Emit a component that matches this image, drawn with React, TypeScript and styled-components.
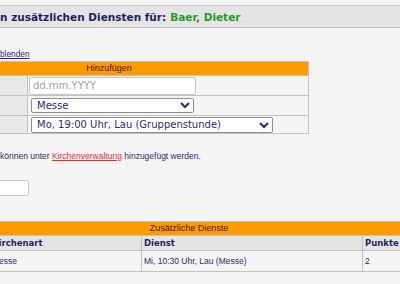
import styled, { createGlobalStyle } from 'styled-components';

//
//Page basics
const GlobalStyle = createGlobalStyle`
    html, body {
        margin: 0;
        padding: 0;
        background: #f4f4f4;
        overflow: hidden;
    }
    body {
        font-family: "Liberation Sans", Arial, sans-serif;
        color: #2c2c6c;
    }
`;

const Page = styled.div`
    width: 400px;
    height: 284px;
    padding-top: 5px;
    overflow: hidden;
    box-sizing: border-box;
`;

//
//Grey title bar at the top
const TitleBar = styled.div`
    height: 21px;
    display: flex;
    align-items: center;
    background: #e4e4e4;
    border-top: 1px solid #cbcbcb;
    border-bottom: 1px solid #c4c4c4;
    font-family: "DejaVu Sans", Verdana, sans-serif;
    font-weight: bold;
    font-size: 10.5px;
    color: #1e1e60;
    white-space: nowrap;
`;

const Name = styled.span`
    color: #1f9a2c;
    margin-left: 4px;
`;

const ToggleLink = styled.a`
    display: block;
    margin-top: 21px;
    font-size: 8.3px;
    line-height: 10px;
    color: #2a2a80;
    text-decoration: underline;
    cursor: pointer;
`;

//
//Tables
const Table = styled.table<{ $width: number; $top: number }>`
    border-collapse: collapse;
    table-layout: fixed;
    width: ${(p) => p.$width}px;
    margin-left: -91px;
    margin-top: ${(p) => p.$top}px;
    border: 1px solid #c2c2c2;
`;

const OrangeHead = styled.th`
    background: #ff9900;
    height: 13px;
    padding: 0;
    border: 1px solid #c2c2c2;
    font-weight: normal;
    font-size: 9px;
    line-height: 13px;
    color: #3a1f2a;
    text-align: center;
`;

const LabelCell = styled.td<{ $h: number }>`
    background: #e8e8e8;
    border: 1px solid #c2c2c2;
    height: ${(p) => p.$h}px;
    padding: 0;
`;

const FieldCell = styled.td`
    border: 1px solid #c2c2c2;
    padding: 0 1px;
    vertical-align: middle;
`;

const DateInput = styled.input`
    display: block;
    box-sizing: border-box;
    width: 167px;
    height: 18px;
    margin: 0;
    padding: 0 3px;
    border: 1px solid #c6c6c6;
    border-radius: 2px;
    background: #fff;
    font-family: "DejaVu Sans", Verdana, sans-serif;
    font-size: 10px;
    color: #2c2c6c;
    &::placeholder {
        color: #a0a0a0;
    }
`;

const Select = styled.select<{ $w: number; $h: number }>`
    display: block;
    box-sizing: border-box;
    width: ${(p) => p.$w}px;
    height: ${(p) => p.$h}px;
    margin: 0 0 0 2px;
    padding: 0 0 0 1px;
    border: 1px solid #8e8e8e;
    border-radius: 2px;
    background: #fff;
    font-family: "DejaVu Sans", Verdana, sans-serif;
    font-size: 10px;
    color: #2a2a70;
`;

const Info = styled.p`
    margin: 17px 0 0 0;
    font-size: 8.5px;
    line-height: 10px;
    color: #2c2c6c;
    white-space: nowrap;
`;

const InfoLink = styled.a`
    color: #ee2a2a;
    text-decoration: underline;
`;

const SmallInput = styled.input`
    display: block;
    box-sizing: border-box;
    width: 120px;
    height: 16px;
    margin: 19px 0 0 -91px;
    border: 1px solid #c6c6c6;
    border-radius: 2px;
    background: #fff;
`;

const HeadCell = styled.th`
    background: #e4e4e4;
    border: 1px solid #c2c2c2;
    height: 14px;
    padding: 0 2px;
    text-align: left;
    font-family: "DejaVu Sans", Verdana, sans-serif;
    font-weight: bold;
    font-size: 8.5px;
    color: #1e1e60;
    white-space: nowrap;
    overflow: hidden;
`;

const DataCell = styled.td`
    border: 1px solid #c2c2c2;
    height: 20px;
    padding: 0 2px;
    font-size: 8.5px;
    color: #2c2c6c;
    white-space: nowrap;
    overflow: hidden;
`;

const rows = [{ time: 'Mi, 10:30 Uhr, Lau (Messe)', type: 'Messe', points: 2 }];

const App = () => {
    return (
        <Page>
            <GlobalStyle />
            <TitleBar>
                n zusätzlichen Diensten für:<Name>Baer, Dieter</Name>
            </TitleBar>
            <ToggleLink>blenden</ToggleLink>

            <Table $width={400} $top={2}>
                <colgroup>
                    <col style={{ width: 118 }} />
                    <col />
                </colgroup>
                <thead>
                    <tr>
                        <OrangeHead colSpan={2}>Hinzufügen</OrangeHead>
                    </tr>
                </thead>
                <tbody>
                    <tr>
                        <LabelCell $h={19} />
                        <FieldCell>
                            <DateInput placeholder="dd.mm.YYYY" />
                        </FieldCell>
                    </tr>
                    <tr>
                        <LabelCell $h={19} />
                        <FieldCell>
                            <Select $w={163} $h={15} defaultValue="Messe">
                                <option>Messe</option>
                            </Select>
                        </FieldCell>
                    </tr>
                    <tr>
                        <LabelCell $h={17} />
                        <FieldCell>
                            <Select $w={242} $h={16} defaultValue="g">
                                <option value="g">Mo, 19:00 Uhr, Lau (Gruppenstunde)</option>
                            </Select>
                        </FieldCell>
                    </tr>
                </tbody>
            </Table>

            <Info>
                können unter <InfoLink>Kirchenverwaltung</InfoLink> hinzugefügt werden.
            </Info>
            <SmallInput />

            <Table $width={560} $top={25}>
                <colgroup>
                    <col style={{ width: 80 }} />
                    <col style={{ width: 152 }} />
                    <col style={{ width: 221 }} />
                    <col />
                </colgroup>
                <thead>
                    <tr>
                        <OrangeHead colSpan={4}>Zusätzliche Dienste</OrangeHead>
                    </tr>
                    <tr>
                        <HeadCell />
                        <HeadCell>Kirchenart</HeadCell>
                        <HeadCell>Dienst</HeadCell>
                        <HeadCell>Punkte</HeadCell>
                    </tr>
                </thead>
                <tbody>
                    {rows.map((r) => (
                        <tr key={r.time}>
                            <DataCell />
                            <DataCell>{r.type}</DataCell>
                            <DataCell>{r.time}</DataCell>
                            <DataCell>{r.points}</DataCell>
                        </tr>
                    ))}
                </tbody>
            </Table>
        </Page>
    );
};

export default App;
